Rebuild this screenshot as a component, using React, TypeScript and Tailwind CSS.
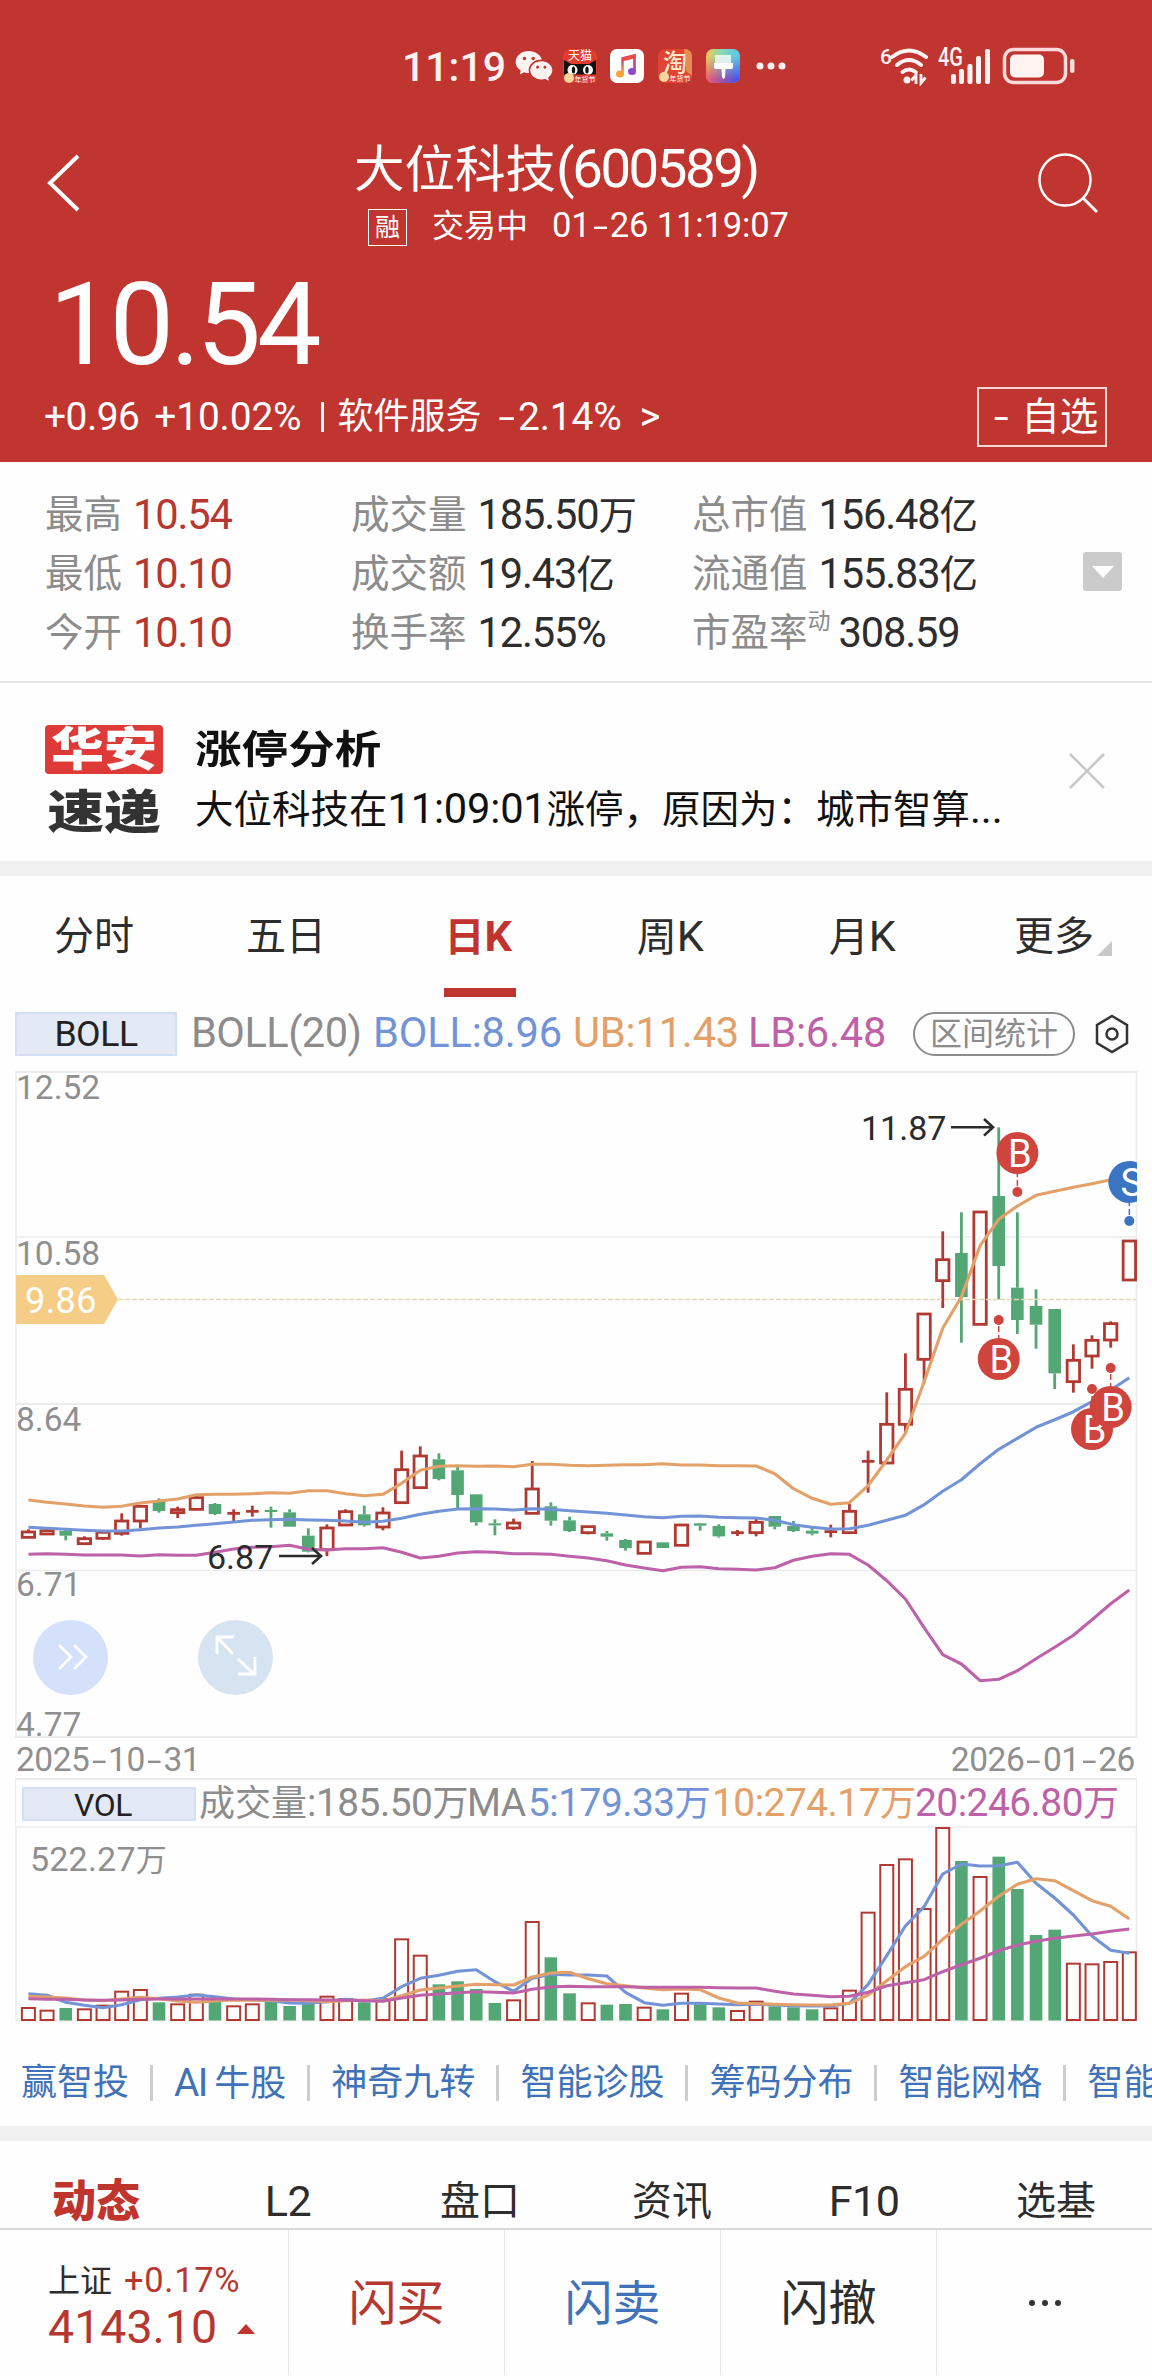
import type { ReactNode } from "react";
import clsx from "clsx";
import { RiWechatFill } from "react-icons/ri";

// open/close direction, high, low, body top, body bottom (chart units, 3 per px)
type Candle = [dir: "u" | "d", high: number, low: number, top: number, bottom: number];

const CANDLES: Candle[] = [
  ["u", 388, 412, 396, 412], ["u", 387, 403, 392, 402], ["d", 390, 421, 393, 407], ["u", 409, 431, 416, 431],
  ["u", 395, 419, 397, 415], ["u", 340, 407, 363, 400], ["u", 316, 385, 319, 363], ["d", 295, 338, 303, 333],
  ["u", 320, 354, 329, 338], ["u", 288, 331, 293, 328], ["d", 309, 345, 312, 342], ["u", 328, 365, 340, 340],
  ["u", 317, 350, 334, 334], ["d", 320, 383, 330, 336], ["d", 328, 380, 337, 380], ["d", 385, 457, 407, 455],
  ["u", 373, 468, 384, 449], ["u", 328, 375, 335, 375], ["d", 317, 380, 343, 376], ["u", 322, 391, 339, 381],
  ["u", 152, 308, 209, 308], ["u", 139, 263, 168, 263], ["d", 160, 241, 178, 237], ["d", 200, 327, 211, 285],
  ["d", 283, 377, 283, 367], ["d", 358, 406, 370, 376], ["u", 356, 390, 369, 384], ["u", 183, 340, 267, 340],
  ["d", 307, 377, 319, 362], ["d", 350, 396, 361, 393], ["u", 378, 403, 380, 398], ["d", 393, 422, 400, 410],
  ["d", 417, 452, 420, 444], ["u", 426, 460, 426, 460], ["d", 427, 444, 427, 444], ["u", 375, 436, 375, 436],
  ["d", 369, 392, 370, 377], ["d", 373, 413, 378, 409], ["u", 390, 408, 398, 398], ["u", 357, 409, 367, 398],
  ["d", 348, 388, 348, 380], ["d", 363, 396, 378, 393], ["d", 384, 406, 392, 401], ["u", 374, 412, 395, 395],
  ["u", 310, 398, 334, 398], ["u", 152, 278, 184, 184], ["u", -23, 189, 73, 189], ["u", -140, 100, -32, 73],
  ["u", -259, -50, -258, -122], ["u", -506, -276, -421, -358], ["d", -563, -172, -441, -309], ["u", -564, -227, -564, -227],
  ["d", -818, -302, -612, -402], ["d", -563, -198, -337, -240], ["d", -332, -154, -282, -226], ["d", -273, -33, -273, -80],
  ["u", -167, -22, -119, -55], ["u", -194, -94, -179, -132], ["u", -236, -157, -229, -180], ["u", -477, -360, -477, -360],
];

const UB = [
  300, 307, 312, 318, 322, 319, 309, 303, 297, 284, 283, 283, 281, 278, 280, 272, 272, 281, 287, 283,
  250, 211, 199, 197, 199, 198, 200, 193, 193, 196, 197, 196, 194, 194, 191, 195, 195, 197, 197, 198,
  221, 266, 295, 313, 308, 257, 180, 100, -55, -215, -310, -463, -542, -582, -614, -626, -638, -649, -661, -672,
];
const MID = [
  382, 385, 388, 391, 393, 393, 389, 384, 381, 376, 371, 366, 361, 359, 358, 360, 361, 363, 367, 364,
  355, 343, 334, 327, 326, 327, 330, 326, 328, 332, 336, 340, 345, 350, 353, 349, 348, 352, 353, 354,
  361, 374, 382, 387, 386, 376, 361, 346, 314, 274, 239, 191, 148, 115, 82, 59, 35, 5, -30, -67,
];
const LB = [
  463, 461, 463, 465, 465, 465, 468, 464, 466, 466, 457, 447, 442, 440, 436, 448, 450, 446, 446, 443,
  457, 474, 469, 459, 455, 457, 461, 461, 463, 469, 474, 482, 495, 504, 512, 502, 500, 506, 508, 510,
  503, 481, 469, 461, 463, 495, 542, 597, 683, 764, 792, 842, 838, 812, 776, 742, 706, 659, 611, 570,
];

const VOLUMES = [
  804, 812, 807, 808, 797, 755, 750, 790, 793, 764, 788, 799, 793, 788, 801, 792, 770, 777, 790, 777,
  598, 647, 736, 727, 750, 792, 781, 546, 655, 763, 790, 797, 795, 803, 811, 761, 796, 805, 813, 785,
  802, 805, 811, 805, 752, 518, 375, 358, 507, 264, 366, 411, 353, 450, 588, 572, 671, 673, 666, 637,
];
const MA5 = [
  764, 769, 790, 799, 806, 797, 782, 778, 774, 768, 773, 780, 783, 785, 792, 793, 788, 781, 786, 778,
  743, 718, 709, 697, 692, 728, 757, 718, 706, 708, 708, 711, 760, 791, 799, 793, 793, 795, 797, 796,
  798, 800, 801, 801, 793, 736, 650, 561, 503, 405, 375, 381, 380, 370, 433, 477, 528, 591, 634, 643,
];
const MA10 = [
  772, 774, 777, 783, 785, 780, 775, 779, 786, 790, 786, 783, 784, 784, 783, 785, 788, 785, 783, 786,
  770, 753, 747, 741, 736, 737, 738, 714, 702, 700, 719, 734, 740, 747, 752, 750, 752, 777, 792, 794,
  796, 797, 798, 798, 793, 768, 725, 683, 652, 601, 556, 516, 472, 436, 419, 425, 455, 485, 502, 540,
];
const MA20 = [
  779, 781, 781, 783, 784, 783, 781, 780, 780, 780, 780, 780, 780, 781, 782, 782, 783, 784, 785, 787,
  777, 769, 765, 761, 758, 760, 762, 751, 744, 742, 743, 743, 743, 745, 745, 745, 745, 746, 747, 747,
  757, 765, 769, 773, 772, 760, 740, 731, 722, 698, 677, 658, 635, 618, 607, 598, 591, 585, 577, 570,
];

const RED = "#b03a32";
const GREEN = "#52a775";
const BLUE = "#7294d6";
const ORANGE = "#e3a069";
const PURPLE = "#bd62a8";

const xAt = (i: number) => 28.4 + i * 18.66;
const priceY = (v: number) => 329 + v / 3;
const volY = (v: number) => v / 3 - 87;

const toPoints = (values: number[], y: (v: number) => number) =>
  values.map((v, i) => `${xAt(i).toFixed(1)},${y(v).toFixed(1)}`).join(" ");

const TRACKING = {
  tight: "tracking-[-0.045em]",
  snug: "tracking-[-0.027em]",
  base: "tracking-[-0.013em]",
  loose: "tracking-[-0.004em]",
};

// Latin runs are set a little larger so digits line up with the Han glyphs
const Txt = ({ children, fit = "base" }: { children: string; fit?: keyof typeof TRACKING }) => (
  <>
    {children.split(/([\u2e80-\u9fff\uff00-\uffef]+|-)/).map((run, i) => {
      if (!run) return null;
      if (run === "-") {
        return (
          <span key={i} className="inline-block w-[0.6em] scale-x-[1.7] text-center">
            -
          </span>
        );
      }
      if (/[\u2e80-\u9fff\uff00-\uffef]/.test(run)) return <span key={i}>{run}</span>;
      return (
        <span key={i} className={clsx("text-[1.08em]", TRACKING[fit])}>
          {run}
        </span>
      );
    })}
  </>
);

const StatusBar = () => (
  <div className="flex h-[132px] items-center pl-[402px] text-[#fff3f2]">
    <span className="w-[112px] pt-px text-[41px] leading-[44px] font-medium">11:19</span>
    <RiWechatFill className="h-[40px] w-[40px]" />
    <svg width="34" height="34" viewBox="0 0 34 34" className="ml-[9px]">
      <rect width="34" height="34" rx="7" fill="#e33c2d" />
      <text x="17" y="11" fontSize="12" fill="#fff" textAnchor="middle">天猫</text>
      <path d="M1 11l7 4h18l7-4v15H1z" fill="#111" />
      <circle cx="9.500" cy="21" r="5" fill="#fff" />
      <circle cx="25" cy="21" r="5" fill="#fff" />
      <ellipse cx="10.500" cy="21" rx="1.700" ry="3.600" fill="#111" />
      <ellipse cx="24" cy="21" rx="1.700" ry="3.600" fill="#111" />
      <path d="M0 25.500h34v1.500a7 7 0 0 1-7 7H7a7 7 0 0 1-7-7z" fill="#d93a2d" />
      <circle cx="6" cy="29" r="5" fill="#f6d69a" />
      <text x="22" y="32.500" fontSize="7" fill="#fff" textAnchor="middle">年货节</text>
    </svg>
    <svg width="34" height="34" viewBox="0 0 34 34" className="ml-[13px]">
      <defs>
        <linearGradient id="note" x1="0" y1="1" x2="1" y2="0">
          <stop offset="0" stopColor="#f2a338" />
          <stop offset="0.5" stopColor="#a13fc0" />
          <stop offset="1" stopColor="#f0443f" />
        </linearGradient>
      </defs>
      <rect width="34" height="34" rx="7" fill="#fff" />
      <path d="M12.500 24V9.500l12-3V22" fill="none" stroke="url(#note)" strokeWidth="2.600" />
      <path d="M12 8.500l13.500-3.300v4L12 12.500z" fill="#ec4a45" />
      <ellipse cx="10" cy="25" rx="4" ry="3.500" fill="#f2a338" />
      <ellipse cx="22" cy="22.500" rx="4" ry="3.500" fill="#8f48cf" />
    </svg>
    <svg width="34" height="34" viewBox="0 0 34 34" className="ml-[14px]">
      <rect width="34" height="34" rx="7" fill="#e14334" />
      <path d="M26 0h1a7 7 0 0 1 7 7v20l-6-5z" fill="#e98b55" />
      <text x="17" y="22" fontSize="24" fontWeight="500" fill="#ffe9c4" textAnchor="middle">淘</text>
      <circle cx="6" cy="28" r="5" fill="#f6d69a" />
      <text x="22" y="32" fontSize="7" fill="#fff" textAnchor="middle">年货节</text>
    </svg>
    <svg width="34" height="34" viewBox="0 0 34 34" className="ml-[14px]">
      <defs>
        <linearGradient id="theme" x1="0" y1="0" x2="1" y2="0">
          <stop offset="0" stopColor="#f3cb55" />
          <stop offset="0.45" stopColor="#86d9b4" />
          <stop offset="1" stopColor="#58c6f2" />
        </linearGradient>
        <linearGradient id="themeLow" x1="0" y1="0" x2="1" y2="0">
          <stop offset="0" stopColor="#ee5a6f" />
          <stop offset="1" stopColor="#3e51f0" />
        </linearGradient>
        <linearGradient id="fade" x1="0" y1="0" x2="0" y2="1">
          <stop offset="0.2" stopColor="#000" />
          <stop offset="0.9" stopColor="#fff" />
        </linearGradient>
        <mask id="low">
          <rect width="34" height="34" fill="url(#fade)" />
        </mask>
      </defs>
      <rect width="34" height="34" rx="7" fill="url(#theme)" />
      <rect width="34" height="34" rx="7" fill="url(#themeLow)" mask="url(#low)" />
      <path d="M9 6h16v8H9z" fill="#fff" opacity="0.75" />
      <path d="M8 14h19v4q0 2-2 2h-5.500l-.5 8q-1.500 4-3 0l-.5-8H10q-2 0-2-2z" fill="#fff" />
    </svg>
    <svg width="32" height="10" className="ml-[15px]" fill="#fff3f2">
      <circle cx="5" cy="5" r="3.500" />
      <circle cx="16" cy="5" r="3.500" />
      <circle cx="27" cy="5" r="3.500" />
    </svg>
    <svg width="200" height="40" viewBox="0 0 200 40" className="ml-[93px]" fill="#fff3f2">
      <text x="0" y="18" fontSize="21" fontWeight="500">6</text>
      <g fill="none" stroke="#fff3f2" strokeWidth="4" strokeLinecap="round">
        <path d="M12 11q17-13 34 0" />
        <path d="M17 19q12-10 24 0" />
        <path d="M22.500 26q6.500-5 13 0" />
      </g>
      <circle cx="27" cy="34" r="3.500" />
      <path d="M38 38V29l-4.500 5.500M43 28v9l4.500-5.500" fill="none" stroke="#fff3f2" strokeWidth="2.800" transform="translate(-2 0)" />
      <text x="58" y="20" fontSize="25" fontWeight="500" textLength="25" lengthAdjust="spacingAndGlyphs">4G</text>
      <rect x="71" y="28" width="5" height="10" rx="2" />
      <rect x="79" y="23" width="5" height="15" rx="2" />
      <rect x="87.500" y="18" width="5" height="20" rx="2" />
      <rect x="96" y="10" width="5" height="28" rx="2" />
      <rect x="105" y="3" width="5" height="35" rx="2" />
      <rect x="124.500" y="3.500" width="61" height="33" rx="9" fill="none" stroke="#fbdcda" strokeWidth="3.500" />
      <rect x="130" y="8.500" width="34" height="23" rx="5" />
      <rect x="190" y="13" width="4.500" height="14" rx="2" fill="#fbdcda" />
    </svg>
  </div>
);

const Header = () => (
  <header className="h-[462px] bg-[#c0352f] text-white">
    <StatusBar />
    <div className="flex h-[124px] items-start pl-[45px]">
      <svg width="38" height="62" viewBox="0 0 38 62" className="mt-[20px]">
        <path d="M33 4L5 31l28 27" fill="none" stroke="#fff" strokeWidth="4" />
      </svg>
      <div className="ml-[271px] w-[682px]">
        <h1 className="mt-[5px] text-[50.500px] leading-[62px] whitespace-nowrap">
          <Txt fit="tight">大位科技(600589)</Txt>
        </h1>
        <div className="mt-[3px] ml-[14px] flex items-center text-[32px] leading-[42px]">
          <span className="mt-[4px] flex h-[37px] w-[39px] items-center justify-center border border-white text-[25px]">融</span>
          <span className="ml-[25px]">交易中</span>
          <span className="ml-[24px] whitespace-nowrap">
            <Txt fit="loose">01-26 11:19:07</Txt>
          </span>
        </div>
      </div>
      <svg width="62" height="62" viewBox="0 0 62 62" className="mt-[20px]">
        <circle cx="29" cy="28" r="25.500" fill="none" stroke="#fff" strokeWidth="2.500" />
        <path d="M47 46l14 14" stroke="#fff" strokeWidth="3" />
      </svg>
    </div>
    <p className="h-[124px] pt-[7px] pl-[49px] text-[115px] leading-[124px] tracking-[-0.035em]">10.54</p>
    <div className="flex h-[74px] items-center justify-between pr-[45px] pl-[44px] text-[36px] leading-[44px]">
      <div className="flex items-center">
        <span><Txt>+0.96</Txt></span>
        <span className="ml-[15px]"><Txt fit="loose">+10.02%</Txt></span>
        <i className="ml-[20px] h-[30px] w-[3px] bg-white" />
        <span className="ml-[13px]">软件服务</span>
        <span className="ml-[15px]"><Txt fit="loose">-2.14%</Txt></span>
        <span className="ml-[18px] text-[40px]">&gt;</span>
      </div>
      <button className="h-[60px] w-[130px] border-2 border-white/80 pl-[10px] text-[38.500px] leading-[56px] whitespace-nowrap">
        <span className="inline-block scale-x-[1.400]">-</span>
        <span className="ml-[15px]">自选</span>
      </button>
    </div>
  </header>
);

const Stat = ({ label, value, sup, red }: { label: string; value: string; sup?: string; red?: boolean }) => (
  <div className="flex h-[59px] items-center leading-[59px]">
    <span className="text-[#8c8c8c]">{label}</span>
    {sup && <sup className="-top-[11px] text-[23px] leading-[30px] text-[#8c8c8c]">{sup}</sup>}
    <span className={clsx(sup ? "ml-[8px]" : "ml-[11px]", red ? "text-[#b5372f]" : "text-[#2d2d2d]")}>
      <Txt fit="snug">{value}</Txt>
    </span>
  </div>
);

const Stats = () => (
  <section className="flex h-[221px] border-b-2 border-[#e5e5e5] pt-[23px] pl-[45px] text-[38.500px]">
    <div className="w-[306px]">
      <Stat label="最高" value="10.54" red />
      <Stat label="最低" value="10.10" red />
      <Stat label="今开" value="10.10" red />
    </div>
    <div className="w-[341px]">
      <Stat label="成交量" value="185.50万" />
      <Stat label="成交额" value="19.43亿" />
      <Stat label="换手率" value="12.55%" />
    </div>
    <div className="w-[391px]">
      <Stat label="总市值" value="156.48亿" />
      <Stat label="流通值" value="155.83亿" />
      <Stat label="市盈率" value="308.59" sup="动" />
    </div>
    <button className="mt-[67px] flex h-[39px] w-[39px] items-center justify-center rounded-[3px] bg-[#cbcbcb]">
      <svg width="22" height="12" viewBox="0 0 22 12">
        <path d="M0 0h22L11 12z" fill="#fff" />
      </svg>
    </button>
  </section>
);

const News = () => (
  <section className="flex h-[178px] items-start pl-[45px] text-[#111]">
    <div className="mt-[42px] w-[118px]">
      <div className="flex h-[49px] items-center justify-center rounded-[4px] bg-[#dd3a38]">
        <span className="scale-x-[1.150] text-[46px] leading-[49px] font-black text-white">华安</span>
      </div>
      <div className="mt-[13px] flex h-[50px] items-center justify-center">
        <span className="scale-x-[1.230] text-[46px] leading-[50px] font-black text-[#333]">速递</span>
      </div>
    </div>
    <div className="ml-[32px] w-[874px] pt-[38px]">
      <h2 className="origin-left scale-x-[1.195] text-[39px] leading-[58px] font-bold">涨停分析</h2>
      <p className="text-[38.500px] leading-[60px] whitespace-nowrap">
        <Txt fit="loose">大位科技在11:09:01涨停，原因为：城市智算...</Txt>
      </p>
    </div>
    <svg width="36" height="36" viewBox="0 0 36 36" className="mt-[70px]">
      <path d="M1 1l34 34M35 1L1 35" stroke="#c8c8c8" strokeWidth="2.500" />
    </svg>
  </section>
);

const PERIODS = ["分时", "五日", "日K", "周K", "月K", "更多"];

const PeriodTabs = () => (
  <nav className="grid h-[120px] grid-cols-6 text-[40px] text-[#2d2d2d]">
    {PERIODS.map((name) => {
      const active = name === "日K";
      return (
        <div key={name} className={clsx("flex flex-col items-center pt-[29px]", active && "font-bold text-[#bf352e]")}>
          <div className="relative right-[2px] leading-[64px]">
            <Txt>{name}</Txt>
            {name === "更多" && (
              <svg width="15" height="15" className="absolute -right-[18px] bottom-[13px]">
                <path d="M15 0v15H0z" fill="#c8c8c8" />
              </svg>
            )}
          </div>
          {active && <i className="mt-[18px] h-[9px] w-[72px] bg-[#bf352e]" />}
        </div>
      );
    })}
  </nav>
);

const BollBar = () => (
  <div className="flex h-[75px] items-center pl-[15px] text-[38.500px] whitespace-nowrap">
    <button className="h-[44px] w-[162px] border-2 border-[#d5dff3] bg-[#e3e9f5] text-[33px] leading-[40px] text-[#222]">
      <Txt>BOLL</Txt>
    </button>
    <span className="ml-[14px] w-[182px] text-[#8c8c8c]"><Txt>BOLL(20)</Txt></span>
    <span className="w-[200px] text-[#7294d6]"><Txt fit="loose">BOLL:8.96</Txt></span>
    <span className="w-[175px] text-[#e3a069]"><Txt fit="loose">UB:11.43</Txt></span>
    <span className="w-[165px] text-[#bd62a8]"><Txt fit="loose">LB:6.48</Txt></span>
    <button className="h-[44px] w-[162px] rounded-full border-2 border-[#8c8c8c] text-[32px] leading-[40px] text-[#8c8c8c]">区间统计</button>
    <svg width="34" height="40" viewBox="0 0 34 40" className="ml-[20px]" fill="none" stroke="#333" strokeWidth="2.500">
      <path d="M17 2l15 9v18l-15 9-15-9V11z" />
      <circle cx="17" cy="20" r="5.500" />
    </svg>
  </div>
);

type MarkerProps = { index: number; y: number; dotY: number; label: "B" | "S" };

const Marker = ({ index, y, dotY, label }: MarkerProps) => {
  const x = xAt(index);
  const color = label === "B" ? "#cf443d" : "#3c74c4";
  return (
    <g>
      <line x1={x} x2={x} y1={y} y2={dotY} stroke={color} strokeWidth="1.500" strokeDasharray="6 3" />
      <circle cx={x} cy={dotY} r="5" fill={color} />
      <circle cx={x} cy={y} r="21" fill={color} />
      <text x={x + 2.5} y={y + 14} fontSize="38" fill="#fff" textAnchor="middle">{label}</text>
    </g>
  );
};

const AxisLabel = ({ y, children }: { y: number; children: ReactNode }) => (
  <text x="16" y={y} fontSize="33.500" fill="#8f8f8f">{children}</text>
);

// The plot starts at y = 1071 of the screen; everything inside is relative to it
const PriceChart = () => (
  <svg width="1152" height="668" viewBox="0 0 1152 668" className="block overflow-visible">
    <defs>
      <clipPath id="plot">
        <rect x="16" y="0" width="1121" height="667" />
      </clipPath>
    </defs>
    <g stroke="#ececec" strokeWidth="2">
      <path d="M16 1H1136M16 333H1136M16 666H1136" />
      <path d="M16 166H1136M16 499.500H1136M16 0V667M1136.500 0V667" strokeWidth="1.500" />
    </g>
    <AxisLabel y={27.5}>12.52</AxisLabel>
    <AxisLabel y={194}>10.58</AxisLabel>
    <AxisLabel y={360}>8.64</AxisLabel>
    <AxisLabel y={525}>6.71</AxisLabel>
    <AxisLabel y={664.5}>4.77</AxisLabel>

    <g clipPath="url(#plot)">
      {CANDLES.map(([dir, high, low, top, bottom], i) => {
        const x = xAt(i);
        const color = dir === "u" ? RED : GREEN;
        const h = (bottom - top) / 3;
        return (
          <g key={i} stroke={color} strokeWidth="2.800">
            <line x1={x} x2={x} y1={priceY(high)} y2={priceY(top)} />
            <line x1={x} x2={x} y1={priceY(bottom)} y2={priceY(low)} />
            {dir === "d" && <rect x={x - 6.3} y={priceY(top)} width="12.600" height={h} fill={GREEN} stroke="none" />}
            {dir === "u" && h > 0 && (
              <rect x={x - 6.2} y={priceY(top)} width="12.400" height={h} fill="#fff" />
            )}
            {dir === "u" && h === 0 && <line x1={x - 6.3} x2={x + 6.3} y1={priceY(top)} y2={priceY(top)} />}
          </g>
        );
      })}
      <line x1="118" x2="1136" y1="228.500" y2="228.500" stroke="#e6d6b4" strokeWidth="1.500" strokeDasharray="5 2" />
      <g fill="none" strokeWidth="3.100" strokeLinejoin="round">
        <polyline points={toPoints(UB, priceY)} stroke={ORANGE} />
        <polyline points={toPoints(MID, priceY)} stroke={BLUE} />
        <polyline points={toPoints(LB, priceY)} stroke={PURPLE} />
      </g>
      <Marker index={53} y={82} dotY={121} label="B" />
      <Marker index={52} y={288} dotY={249} label="B" />
      <Marker index={57} y={358} dotY={318} label="B" />
      <Marker index={58} y={336} dotY={297} label="B" />
      <Marker index={59} y={111} dotY={150} label="S" />
    </g>

    <path d="M16 204h88l14 24.500-14 24.500H16z" fill="#f5cd86" />
    <text x="25" y="241.500" fontSize="36" letterSpacing="0.4" fill="#fff">9.86</text>

    <g fill="#2b2b2b" fontSize="34">
      <text x="861" y="69">11.87</text>
      <text x="207" y="498">6.87</text>
    </g>
    <g fill="none" stroke="#2b2b2b" strokeWidth="2.600">
      <path d="M951 56.300h42M984 48l9 8.300-9 8.300" />
      <path d="M279 485h41M312 477l9 8-9 8" />
    </g>

    <circle cx="70.500" cy="586.500" r="37.500" fill="#d5e0fa" />
    <circle cx="235.500" cy="586.500" r="37.500" fill="#d6e3f1" />
    <g fill="none" stroke="#fff" strokeWidth="2.800">
      <path d="M59 574l12 12-12 12M74 574l12 12-12 12" />
      <path d="M217 583v-17h17M218 567l15 16M255 586v17h-17M238 588l16 15" />
    </g>
  </svg>
);

const VolumeChart = () => (
  <svg width="1152" height="197" viewBox="0 0 1152 197" className="block">
    <path d="M16 0V195M1136.500 0V195M16 1H1136" stroke="#ececec" strokeWidth="1.500" />
    <path d="M16 195H1136" stroke="#ececec" />
    <text x="30" y="45" fontSize="34" letterSpacing="0.2" fill="#8f8f8f">
      522.27<tspan fontSize="31">万</tspan>
    </text>
    {VOLUMES.map((v, i) => {
      const x = xAt(i);
      const y = volY(v);
      return CANDLES[i][0] === "u" ? (
        <rect key={i} x={x - 6.5} y={y + 1} width="13" height={193 - y} fill="none" stroke={RED} strokeWidth="2" />
      ) : (
        <rect key={i} x={x - 6.3} y={y} width="12.600" height={194.500 - y} fill={GREEN} />
      );
    })}
    <g fill="none" strokeWidth="3.100" strokeLinejoin="round">
      <polyline points={toPoints(MA5, volY)} stroke={BLUE} />
      <polyline points={toPoints(MA10, volY)} stroke={ORANGE} />
      <polyline points={toPoints(MA20, volY)} stroke={PURPLE} />
    </g>
  </svg>
);

const VolumeBar = () => (
  <div className="mx-[15px] flex h-[48px] items-center border border-t-2 border-b-0 border-[#ececec] pt-px pl-[6px] text-[36px] leading-[46px] whitespace-nowrap">
    <span className="h-[34px] w-[174px] border-2 border-[#d5dff3] bg-[#e3e9f5] pr-[12px] text-center text-[29.500px] leading-[32px] text-[#222]">
      <Txt>VOL</Txt>
    </span>
    <span className="ml-[3px] w-[268px] text-[#8c8c8c]"><Txt>成交量:185.50万</Txt></span>
    <span className="w-[61px] text-[#8c8c8c]"><Txt>MA</Txt></span>
    <span className="w-[184px] text-[#7294d6]"><Txt>5:179.33万</Txt></span>
    <span className="w-[203px] text-[#e3a069]"><Txt>10:274.17万</Txt></span>
    <span className="text-[#bd62a8]"><Txt>20:246.80万</Txt></span>
  </div>
);

const TOOLS = ["赢智投", "AI 牛股", "神奇九转", "智能诊股", "筹码分布", "智能网格", "智能"];

const ToolLinks = () => (
  <div className="flex h-[103px] items-center overflow-hidden pt-[17px] pl-[21px] text-[36px] leading-[44px] text-[#3f72b8]">
    {TOOLS.map((name, i) => (
      <div key={name + i} className="flex shrink-0 items-center whitespace-nowrap">
        {i > 0 && <i className="mx-[21px] h-[36px] w-[3px] bg-[#cdcdcd]" />}
        <span>
          <Txt fit="tight">{name}</Txt>
        </span>
      </div>
    ))}
  </div>
);

const InfoTabs = () => (
  <nav className="grid h-[89px] grid-cols-6 border-b-2 border-[#d6d6d6] pt-[30px] text-center text-[40px] leading-[62px] text-[#2d2d2d]">
    {["动态", "L2", "盘口", "资讯", "F10", "选基"].map((name) => (
      <span key={name} className={clsx(name === "动态" && "text-[44px] font-black text-[#bf352e]")}>
        <Txt>{name}</Txt>
      </span>
    ))}
  </nav>
);

const TradeBar = () => (
  <footer className="flex h-[145px] text-[48px]">
    <div className="w-[289px] border-r border-[#e5e5e5] pt-[28px] pl-[48px] text-[#b5372f]">
      <p className="text-[32px] leading-[44px]">
        <span className="mr-[12px] text-[#2d2d2d]">上证</span>
        <span className="tracking-[0.02em] text-[34.500px]">+0.17%</span>
      </p>
      <div className="flex items-center leading-[48px]">
        <span className="text-[46.500px]">4143.10</span>
        <svg width="18" height="10" className="mt-[4px] ml-[20px]">
          <path d="M9 0l9 10H0z" fill="#bf352e" />
        </svg>
      </div>
    </div>
    <button className="w-[216px] border-r border-[#e5e5e5] pt-[3px] text-[#b5372f]">闪买</button>
    <button className="w-[216px] border-r border-[#e5e5e5] pt-[3px] text-[#3f72b8]">闪卖</button>
    <button className="w-[216px] border-r border-[#e5e5e5] pt-[3px] text-[#2d2d2d]">闪撤</button>
    <button className="flex flex-1 items-center justify-center gap-[7px]">
      <i className="size-[6px] rounded-full bg-[#333]" />
      <i className="size-[6px] rounded-full bg-[#333]" />
      <i className="size-[6px] rounded-full bg-[#333]" />
    </button>
  </footer>
);

export default function App() {
  return (
    <div className="h-[2376px] w-[1152px] overflow-hidden bg-[#fefefe] font-['Roboto','Noto_Sans_CJK_SC',sans-serif]">
      <Header />
      <Stats />
      <News />
      <div className="h-[15px] bg-[#f0f0f0]" />
      <PeriodTabs />
      <BollBar />
      <PriceChart />
      <div className="flex h-[39px] items-center justify-between pt-[2px] pr-[17px] pl-[16px] text-[31px] leading-[37px] text-[#8f8f8f]">
        <span><Txt>2025-10-31</Txt></span>
        <span><Txt>2026-01-26</Txt></span>
      </div>
      <VolumeBar />
      <VolumeChart />
      <ToolLinks />
      <div className="h-[15px] bg-[#f0f0f0]" />
      <InfoTabs />
      <TradeBar />
    </div>
  );
}
